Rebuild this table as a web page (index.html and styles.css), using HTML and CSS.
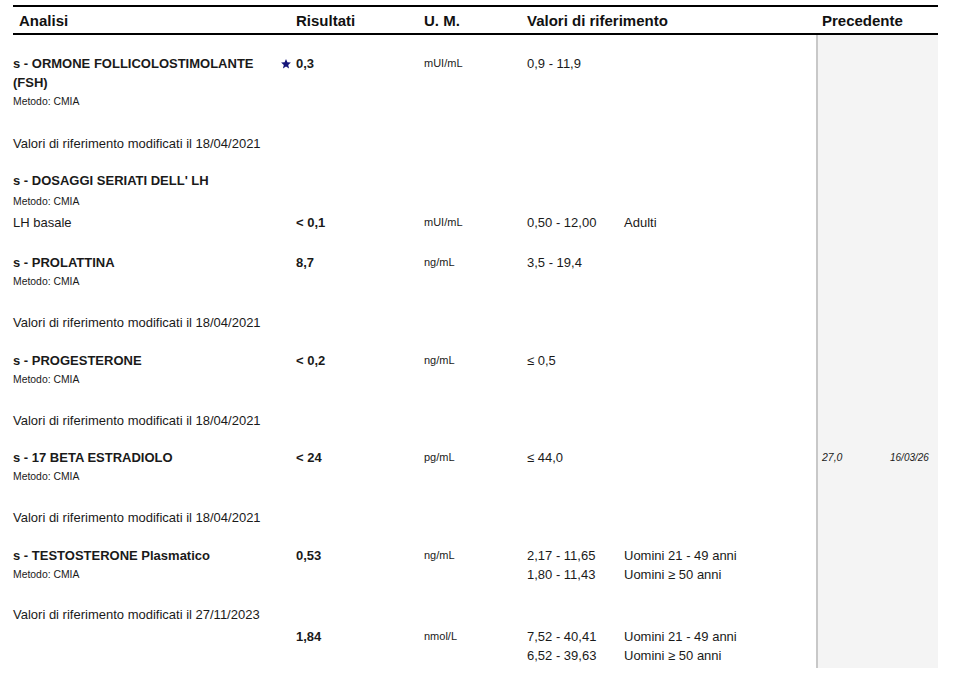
FILE: index.html
```html
<!DOCTYPE html>
<html lang="it">
<head>
<meta charset="utf-8">
<title>Referto</title>
<link rel="stylesheet" href="styles.css">
</head>
<body>
<table class="report">
  <colgroup>
    <col class="c-name"><col class="c-flag"><col class="c-res"><col class="c-um">
    <col class="c-range"><col class="c-note"><col class="c-pval"><col class="c-pdate">
  </colgroup>
  <thead>
    <tr>
      <th colspan="2" class="th-first">Analisi</th>
      <th>Risultati</th>
      <th>U. M.</th>
      <th colspan="2">Valori di riferimento</th>
      <th colspan="2" class="th-prev">Precedente</th>
    </tr>
  </thead>
  <tbody>
    <tr class="r-first">
      <td><div class="name">s - ORMONE FOLLICOLOSTIMOLANTE (FSH)</div><div class="method">Metodo: CMIA</div></td>
      <td class="flag"><svg class="star" viewBox="0 0 10 10" width="10" height="10"><polygon points="5,0 6.4,3.3 9.9,3.6 7.2,5.9 8.1,9.6 5,7.6 1.9,9.6 2.8,5.9 0.1,3.6 3.6,3.3"/></svg></td>
      <td class="res">0,3</td>
      <td class="um">mUI/mL</td>
      <td class="range">0,9 - 11,9</td>
      <td class="note"></td>
      <td class="pval"></td><td class="pdate"></td>
    </tr>
    <tr class="r-info r-info-first">
      <td colspan="6" class="info">Valori di riferimento modificati il 18/04/2021</td>
      <td class="pval"></td><td class="pdate"></td>
    </tr>
    <tr class="r-test r-t18">
      <td><div class="name">s - DOSAGGI SERIATI DELL' LH</div><div class="method method-gap">Metodo: CMIA</div></td>
      <td></td><td></td><td></td><td></td><td></td>
      <td class="pval"></td><td class="pdate"></td>
    </tr>
    <tr class="r-sub">
      <td class="plain">LH basale</td>
      <td></td>
      <td class="res">&lt; 0,1</td>
      <td class="um">mUI/mL</td>
      <td class="range">0,50 - 12,00</td>
      <td class="note">Adulti</td>
      <td class="pval"></td><td class="pdate"></td>
    </tr>
    <tr class="r-test r-t21">
      <td><div class="name">s - PROLATTINA</div><div class="method">Metodo: CMIA</div></td>
      <td></td>
      <td class="res">8,7</td>
      <td class="um">ng/mL</td>
      <td class="range">3,5 - 19,4</td>
      <td class="note"></td>
      <td class="pval"></td><td class="pdate"></td>
    </tr>
    <tr class="r-info">
      <td colspan="6" class="info">Valori di riferimento modificati il 18/04/2021</td>
      <td class="pval"></td><td class="pdate"></td>
    </tr>
    <tr class="r-test r-t19">
      <td><div class="name">s - PROGESTERONE</div><div class="method">Metodo: CMIA</div></td>
      <td></td>
      <td class="res">&lt; 0,2</td>
      <td class="um">ng/mL</td>
      <td class="range">≤ 0,5</td>
      <td class="note"></td>
      <td class="pval"></td><td class="pdate"></td>
    </tr>
    <tr class="r-info">
      <td colspan="6" class="info">Valori di riferimento modificati il 18/04/2021</td>
      <td class="pval"></td><td class="pdate"></td>
    </tr>
    <tr class="r-test r-t18">
      <td><div class="name">s - 17 BETA ESTRADIOLO</div><div class="method">Metodo: CMIA</div></td>
      <td></td>
      <td class="res">&lt; 24</td>
      <td class="um">pg/mL</td>
      <td class="range">≤ 44,0</td>
      <td class="note"></td>
      <td class="pval">27,0</td><td class="pdate">16/03/26</td>
    </tr>
    <tr class="r-info">
      <td colspan="6" class="info">Valori di riferimento modificati il 18/04/2021</td>
      <td class="pval"></td><td class="pdate"></td>
    </tr>
    <tr class="r-test r-t19">
      <td><div class="name">s - TESTOSTERONE Plasmatico</div><div class="method">Metodo: CMIA</div></td>
      <td></td>
      <td class="res">0,53</td>
      <td class="um">ng/mL</td>
      <td class="range">2,17 - 11,65<br>1,80 - 11,43</td>
      <td class="note">Uomini 21 - 49 anni<br>Uomini ≥ 50 anni</td>
      <td class="pval"></td><td class="pdate"></td>
    </tr>
    <tr class="r-info r-info-21">
      <td colspan="6" class="info">Valori di riferimento modificati il 27/11/2023</td>
      <td class="pval"></td><td class="pdate"></td>
    </tr>
    <tr class="r-sub r-last">
      <td></td>
      <td></td>
      <td class="res">1,84</td>
      <td class="um">nmol/L</td>
      <td class="range">7,52 - 40,41<br>6,52 - 39,63</td>
      <td class="note">Uomini 21 - 49 anni<br>Uomini ≥ 50 anni</td>
      <td class="pval"></td><td class="pdate"></td>
    </tr>
  </tbody>
</table>
</body>
</html>
```

FILE: styles.css
```css
html, body {
  margin: 0;
  padding: 0;
  background: #fff;
}
body {
  font-family: "Liberation Sans", Arial, sans-serif;
  color: #1a1a1a;
}
.report {
  margin: 5px 0 0 13px;
  width: 925px;
  table-layout: fixed;
  border-collapse: separate;
  border-spacing: 0;
}
.c-name { width: 268px; }
.c-flag { width: 15px; }
.c-res { width: 128px; }
.c-um { width: 103px; }
.c-range { width: 97px; }
.c-note { width: 192px; }
.c-pval { width: 68px; }
.c-pdate { width: 54px; }

.report th {
  font-size: 15px;
  font-weight: bold;
  text-align: left;
  line-height: 25px;
  padding: 1px 0 0;
  border-top: 2px solid #000;
  border-bottom: 2px solid #000;
  color: #111;
  white-space: nowrap;
}
.report .th-first { padding-left: 6px; }
.report .th-prev { padding-left: 6px; }

.report td {
  padding: 0;
  vertical-align: top;
  font-size: 13px;
  line-height: 19px;
}
.name {
  font-weight: bold;
  font-size: 13px;
  line-height: 19px;
  padding-right: 10px;
}
.method {
  font-size: 10.4px;
  line-height: 19px;
}
.method-gap { margin-top: 2px; }
.flag { text-align: left; }
.star {
  display: inline-block;
  vertical-align: middle;
  margin-top: -1px;
  fill: #16167a;
}
.res { font-weight: bold; }
.report .um { font-size: 11px; }
.range, .note, .info, .plain { font-size: 13px; }
.report .pval {
  background: #f4f4f4;
  border-left: 2px solid #c8c8c8;
  padding-left: 4px;
  font-style: italic;
  font-size: 10.5px;
}
.report .pdate {
  background: #f4f4f4;
  font-style: italic;
  font-size: 10px;
  padding-left: 6px;
}

.report .r-first td { padding-top: 19px; }
.report .r-info td { padding-top: 22px; }
.report .r-info-first td { padding-top: 23px; }
.report .r-info-21 td { padding-top: 21px; }
.report .r-t18 td { padding-top: 18px; }
.report .r-t19 td { padding-top: 19px; }
.report .r-t21 td { padding-top: 21px; }
.report .r-sub td { padding-top: 2px; }
.report .r-last td { padding-top: 3px; padding-bottom: 3px; }
```
